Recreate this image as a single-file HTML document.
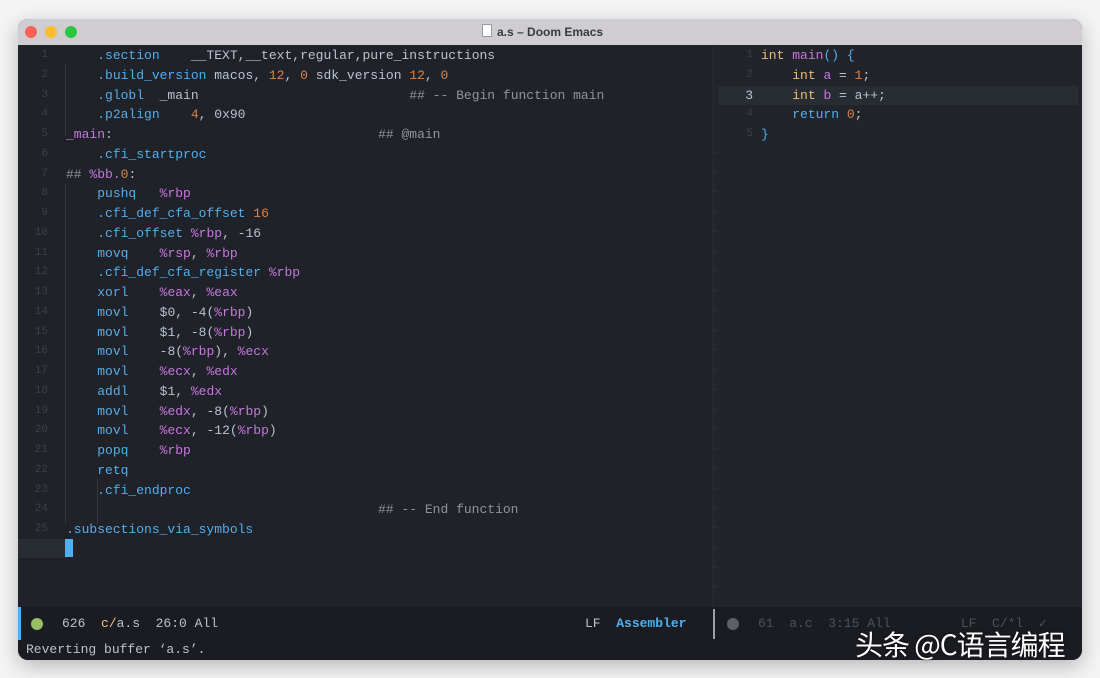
<!DOCTYPE html><html><head><meta charset="utf-8"><style>
body{margin:0;width:1100px;height:678px;background:#f4f4f5;overflow:hidden;position:relative;font-family:"Liberation Mono",monospace}
.win{position:absolute;left:18px;top:19px;width:1064px;height:641px;border-radius:10px;overflow:hidden;background:#21242b;box-shadow:0 6px 20px rgba(0,0,0,.25)}
.tb{position:absolute;left:0;top:0;width:100%;height:26px;background:#cfcdd1;}
.dot{position:absolute;top:7px;width:12px;height:12px;border-radius:50%}
.title{position:absolute;left:464px;top:5px;font:bold 12px "Liberation Sans",sans-serif;color:#3a3a3a}
.l{position:absolute;font-size:13px;white-space:pre;color:#bbc2cf;line-height:19px}
.n{position:absolute;font-size:11px;color:#3b4048;text-align:right;width:20px;line-height:19px}
.b{color:#51afef}.o{color:#da8548}.m{color:#c678dd}.y{color:#ecbe7b}.c{color:#8f949c}
.guide{position:absolute;width:1px;background:#343841}
</style></head><body>
<div class="win">
<div class="tb"><div class="dot" style="left:7px;background:#fe5f57"></div><div class="dot" style="left:27px;background:#febc2e"></div><div class="dot" style="left:47px;background:#28c840"></div>
<div class="title"><span style="display:inline-block;width:8px;height:11px;background:#fff;border:1px solid #999;vertical-align:-1px;margin-right:5px;border-radius:1px"></span>a.s – Doom Emacs</div></div>
<div style="position:absolute;left:0;top:26px;width:694px;height:562px;background:#1f2228"></div>
<div style="position:absolute;left:695px;top:26px;width:369px;height:562px;background:#21242b;border-left:1px solid #2b2e35"></div>
<div class="guide" style="left:47px;top:46px;height:70px"></div>
<div class="guide" style="left:47px;top:165px;height:340px"></div>
<div class="guide" style="left:79px;top:460px;height:45px"></div>
<div style="position:absolute;left:700px;top:67px;width:360px;height:19px;background:#282c33"></div>
<div id="L"></div>
<div style="position:absolute;left:0;top:520px;width:48px;height:19px;background:#282c33"></div>
<div style="position:absolute;left:47px;top:520px;width:8px;height:18px;background:#51afef"></div>
<div style="position:absolute;left:0;top:588px;width:1064px;height:33px;background:#1a1c21"></div>
<div style="position:absolute;left:0;top:588px;width:3px;height:33px;background:#51afef"></div>
<div style="position:absolute;left:695px;top:590px;width:2px;height:30px;background:#9ca0a8"></div>
<div style="position:absolute;left:13px;top:599px;width:12px;height:12px;border-radius:50%;background:#98be65"></div>
<div style="position:absolute;left:709px;top:599px;width:12px;height:12px;border-radius:50%;background:#5b6068"></div>
<div class="l" style="left:44px;top:595px">626  <span class="y">c/</span>a.s  26:0 All</div>
<div class="l" style="left:567px;top:595px">LF  <b class="b" style="font-weight:bold">Assembler</b></div>
<div class="l" style="left:740px;top:595px;color:#4d525a">61  a.c  3:15 All         LF  C/*l  ✓</div>
<div style="position:absolute;left:0;top:621px;width:1064px;height:20px;background:#1a1c21"></div>
<div class="l" style="left:8px;top:621px;font-size:13px">Reverting buffer ‘a.s’.</div>
</div>
<div style="position:absolute;left:855px;top:624px;font:400 28px 'Noto Sans CJK SC',sans-serif;letter-spacing:-1px;color:#fff;text-shadow:0 0 3px rgba(0,0,0,.5)">头条 @C语言编程</div>
<script>
var A=[
'    <span class="b">.section</span>    __TEXT,__text,regular,pure_instructions',
'    <span class="b">.build_version</span> macos, <span class="o">12</span>, <span class="o">0</span> sdk_version <span class="o">12</span>, <span class="o">0</span>',
'    <span class="b">.globl</span>  _main                           <span class="c">## -- Begin function main</span>',
'    <span class="b">.p2align</span>    <span class="o">4</span>, 0x90',
'<span class="m">_main</span>:                                  <span class="c">## @main</span>',
'    <span class="b">.cfi_startproc</span>',
'<span class="c">##</span> <span class="m">%bb.</span><span class="o">0</span>:',
'    <span class="b">pushq</span>   <span class="m">%rbp</span>',
'    <span class="b">.cfi_def_cfa_offset</span> <span class="o">16</span>',
'    <span class="b">.cfi_offset</span> <span class="m">%rbp</span>, -16',
'    <span class="b">movq</span>    <span class="m">%rsp</span>, <span class="m">%rbp</span>',
'    <span class="b">.cfi_def_cfa_register</span> <span class="m">%rbp</span>',
'    <span class="b">xorl</span>    <span class="m">%eax</span>, <span class="m">%eax</span>',
'    <span class="b">movl</span>    $0, -4(<span class="m">%rbp</span>)',
'    <span class="b">movl</span>    $1, -8(<span class="m">%rbp</span>)',
'    <span class="b">movl</span>    -8(<span class="m">%rbp</span>), <span class="m">%ecx</span>',
'    <span class="b">movl</span>    <span class="m">%ecx</span>, <span class="m">%edx</span>',
'    <span class="b">addl</span>    $1, <span class="m">%edx</span>',
'    <span class="b">movl</span>    <span class="m">%edx</span>, -8(<span class="m">%rbp</span>)',
'    <span class="b">movl</span>    <span class="m">%ecx</span>, -12(<span class="m">%rbp</span>)',
'    <span class="b">popq</span>    <span class="m">%rbp</span>',
'    <span class="b">retq</span>',
'    <span class="b">.cfi_endproc</span>',
'                                        <span class="c">## -- End function</span>',
'<span class="b">.subsections_via_symbols</span>'];
var B=['<span class="y">int</span> <span class="m">main</span><span class="b">() {</span>',
'    <span class="y">int</span> <span class="m">a</span> = <span class="o">1</span>;',
'    <span class="y">int</span> <span class="m">b</span> = a++;',
'    <span class="b">return</span> <span class="o">0</span>;',
'<span class="b">}</span>'];
var h='';
for(var i=0;i<A.length;i++){var t=27+i*19.75;h+='<div class="n" style="left:10px;top:'+t+'px">'+(i+1)+'</div><div class="l" style="left:48px;top:'+t+'px">'+A[i]+'</div>';}
for(var i=0;i<B.length;i++){var t=27+i*19.75;h+='<div class="n" style="left:715px;top:'+t+'px;'+(i==2?'color:#bbc2cf;font-size:13px':'')+'">'+(i+1)+'</div><div class="l" style="left:743px;top:'+t+'px">'+B[i]+'</div>';}
for(var i=5;i<28;i++){h+='<div class="n" style="left:680px;top:'+(27+i*19.75)+'px;color:#2f333a">~</div>';}
document.getElementById('L').innerHTML=h;
</script>
</body></html>
